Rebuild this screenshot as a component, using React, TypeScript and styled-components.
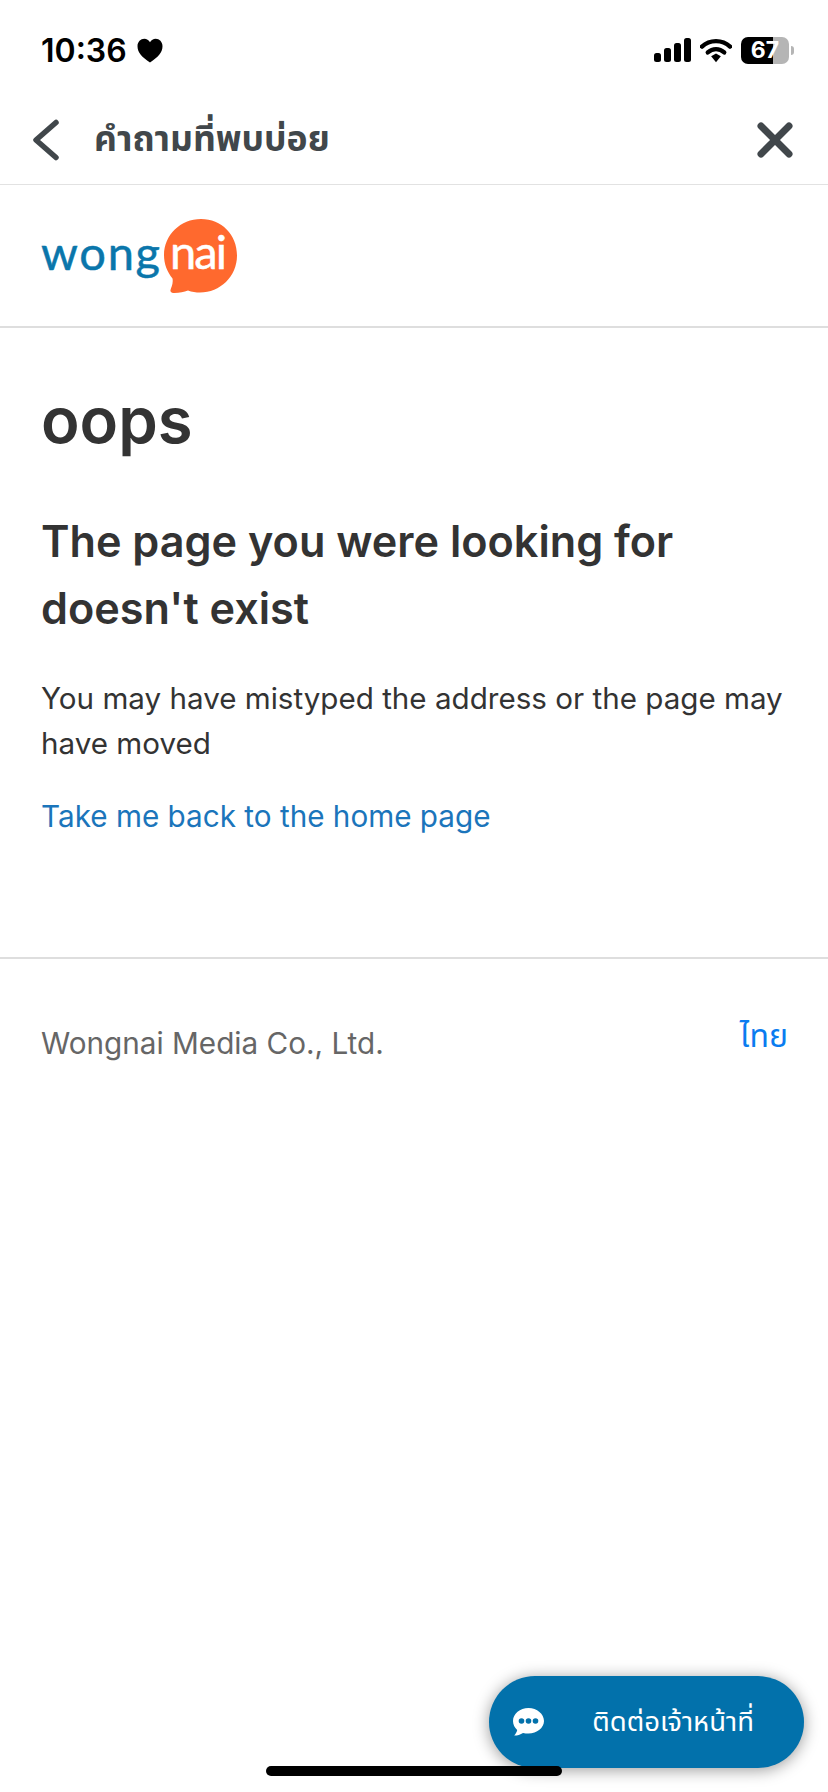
import React from "react";
import styled, { createGlobalStyle } from "styled-components";
import { X } from "lucide-react";

const GlobalStyle = createGlobalStyle`
  html, body {
    margin: 0;
    padding: 0;
    background: #fff;
  }
  * {
    box-sizing: border-box;
  }
`;

const Page = styled.div`
  position: relative;
  width: 828px;
  height: 1792px;
  overflow: hidden;
  background: #fff;
  font-family: Inter, "Noto Sans", "Noto Sans Thai", sans-serif;
  color: #333;
`;

const StatusBar = styled.div`
  height: 92px;
  padding: 8px 34px 0 41px;
  display: flex;
  align-items: center;
  justify-content: space-between;
`;

const Clock = styled.div`
  display: flex;
  align-items: center;
  gap: 10px;
  font-size: 32px;
  font-weight: 600;
  color: #000;
`;

const StatusIcons = styled.div`
  display: flex;
  align-items: center;
  gap: 9px;
`;

const BatteryWrap = styled.div`
  display: flex;
  align-items: center;
  gap: 2px;
`;

const Battery = styled.div`
  width: 48px;
  height: 27px;
  border-radius: 7px;
  overflow: hidden;
  background: linear-gradient(90deg, #000 67%, #b5b5b5 67%);
  color: #fff;
  font-size: 23px;
  font-weight: 700;
  line-height: 27px;
  text-align: center;
`;

const BatteryCap = styled.div`
  width: 3px;
  height: 9px;
  border-radius: 0 3px 3px 0;
  background: #b5b5b5;
`;

const NavBar = styled.div`
  height: 93px;
  padding: 4px 25px 0 30px;
  display: flex;
  align-items: center;
  border-bottom: 1px solid #e2e2e2;
  color: #41474b;
`;

const NavTitle = styled.div`
  flex: 1;
  margin-left: 34px;
  font-size: 35.5px;
  font-weight: 700;
`;

const LogoRow = styled.div`
  height: 143px;
  padding: 0 0 0 41px;
  display: flex;
  align-items: center;
  border-bottom: 2px solid #dedede;
`;

const Content = styled.main`
  padding: 56px 30px 0 41px;
  height: 631px;
  border-bottom: 2px solid #dedede;
`;

const Oops = styled.h1`
  margin: 0;
  font-size: 63.4px;
  font-weight: 600;
  line-height: 72px;
  color: #333;
`;

const Heading = styled.h2`
  margin: 52px 0 0;
  font-size: 43.2px;
  font-weight: 600;
  line-height: 67px;
  color: #333;
`;

const Body = styled.p`
  margin: 34px 0 0;
  font-size: 29.6px;
  line-height: 45px;
  color: #333;
`;

const HomeLink = styled.a`
  display: block;
  margin-top: 28px;
  font-size: 29.7px;
  line-height: 45px;
  color: #1b75bb;
`;

const Footer = styled.footer`
  padding: 66px 40px 0 41px;
  display: flex;
  align-items: flex-start;
  justify-content: space-between;
`;

const Company = styled.div`
  font-size: 29.7px;
  line-height: 36px;
  color: #666;
`;

const Language = styled.a`
  margin-top: -9px;
  font-size: 32px;
  line-height: 40px;
  color: #0a7cf0;
`;

const ContactButton = styled.button`
  position: absolute;
  left: 489px;
  top: 1676px;
  width: 315px;
  height: 92px;
  padding: 0 50px 0 24px;
  display: flex;
  align-items: center;
  justify-content: space-between;
  border: none;
  border-radius: 46px;
  background: #0271ab;
  box-shadow: 0 2px 16px rgba(0, 0, 0, 0.4);
  color: #fff;
  font-family: inherit;
  font-size: 27.5px;
`;

const HomeIndicator = styled.div`
  position: absolute;
  left: 266px;
  top: 1766px;
  width: 296px;
  height: 10px;
  border-radius: 5px;
  background: #000;
`;

const Heart = () => (
  <svg width="26" height="25" viewBox="0 0 26 25">
    <path
      d="M13 24.5C5 19 0.5 14.5 0.5 8.2 0.5 3.8 3.7 0.8 7.3 0.8c2.4 0 4.4 1.2 5.7 3.4C14.3 2 16.3 0.8 18.7 0.8c3.6 0 6.8 3 6.8 7.4C25.5 14.5 21 19 13 24.5z"
      fill="#000"
    />
  </svg>
);

const Signal = () => (
  <svg width="37" height="24" viewBox="0 0 37 24" fill="#000">
    <rect x="0" y="15" width="7" height="9" rx="2.5" />
    <rect x="10" y="10" width="7" height="14" rx="2.5" />
    <rect x="20" y="5" width="7" height="19" rx="2.5" />
    <rect x="30" y="0" width="7" height="24" rx="2.5" />
  </svg>
);

const Wifi = () => (
  <svg width="32" height="25" viewBox="0 0 33 25" fill="none" stroke="#000">
    <path d="M2 8.5C10 1 23 1 31 8.5" strokeWidth="4.5" strokeLinecap="round" />
    <path d="M8 14.5C13 10 20 10 25 14.5" strokeWidth="4.5" strokeLinecap="round" />
    <path d="M11.5 18.5L16.5 15.5 21.5 18.5 16.5 24.5z" fill="#000" stroke="none" />
  </svg>
);

const BackArrow = () => (
  <svg width="30" height="46" viewBox="0 0 30 46" fill="none">
    <path
      d="M26 5.5L6 23l20 17.5"
      stroke="#41474b"
      strokeWidth="5.5"
      strokeLinecap="round"
      strokeLinejoin="round"
    />
  </svg>
);

const Logo = () => (
  <svg width="197" height="76" viewBox="0 0 197 76">
    <path
      d="M160 1C139.6 1 123 17 123 37c0 9 3.2 17 8.5 23.500 1 5-1.500 9-2 11.500-.5 2.300 1.500 3 4 3 5 0 9.500-1 13.500-2.500 3.800 1.400 8 2 12 2 20 0 37-16 37-37S180.500 1 160 1z"
      fill="#ff692e"
    />
    <text
      x="0"
      y="52"
      fontFamily="Lato, sans-serif"
      fontSize="47"
      fill="#0a76ab"
      stroke="#0a76ab"
      strokeWidth="0.5"
      textLength="119"
    >
      wong
    </text>
    <text
      x="129"
      y="51"
      fontFamily="Lato, sans-serif"
      fontSize="47"
      fill="#fff"
      stroke="#fff"
      strokeWidth="0.5"
      textLength="57"
    >
      nai
    </text>
  </svg>
);

const ChatBubble = () => (
  <svg width="31" height="28" viewBox="0 0 31 28">
    <path
      d="M15.5 0C7 0 0 5.8 0 13c0 3.5 1.6 6.6 4.2 9-.4 2-1.4 3.8-3 5.5 3.3 0 6.3-1 8.8-2.6 1.7.4 3.6.6 5.5.6C24 25.5 31 19.9 31 13S24 0 15.5 0z"
      fill="#fff"
    />
    <circle cx="8.5" cy="13" r="2.8" fill="#0271ab" />
    <circle cx="15.5" cy="13" r="2.8" fill="#0271ab" />
    <circle cx="22.5" cy="13" r="2.8" fill="#0271ab" />
  </svg>
);

const App = () => {
  return (
    <Page>
      <GlobalStyle />
      <StatusBar>
        <Clock>
          10:36
          <Heart />
        </Clock>
        <StatusIcons>
          <Signal />
          <Wifi />
          <BatteryWrap>
            <Battery>67</Battery>
            <BatteryCap />
          </BatteryWrap>
        </StatusIcons>
      </StatusBar>
      <NavBar>
        <BackArrow />
        <NavTitle>คำถามที่พบบ่อย</NavTitle>
        <X size={56} strokeWidth={3} />
      </NavBar>
      <LogoRow>
        <Logo />
      </LogoRow>
      <Content>
        <Oops>oops</Oops>
        <Heading>
          The page you were looking for
          <br />
          doesn't exist
        </Heading>
        <Body>
          You may have mistyped the address or the page may have moved
        </Body>
        <HomeLink>Take me back to the home page</HomeLink>
      </Content>
      <Footer>
        <Company>Wongnai Media Co., Ltd.</Company>
        <Language>ไทย</Language>
      </Footer>
      <ContactButton>
        <ChatBubble />
        <span>ติดต่อเจ้าหน้าที่</span>
      </ContactButton>
      <HomeIndicator />
    </Page>
  );
};

export default App;
